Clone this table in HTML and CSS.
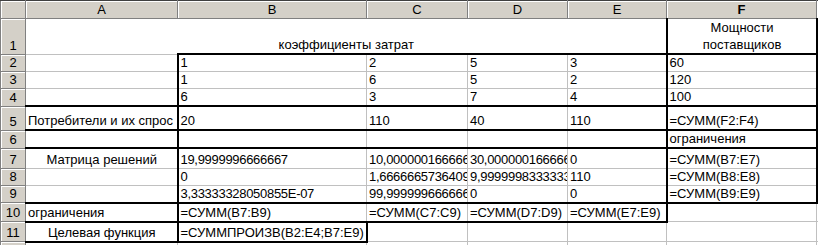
FILE: index.html
```html
<!DOCTYPE html>
<html lang="ru">
<head>
    <meta charset="UTF-8">
    <title>Транспортная задача</title>
    <link rel="stylesheet" href="styles.css">
</head>
<body>
    <table class="sheet">
        <colgroup>
            <col class="col-hdr">
            <col class="col-a">
            <col class="col-b">
            <col class="col-c">
            <col class="col-d">
            <col class="col-e">
            <col class="col-f">
            <col class="col-g">
        </colgroup>
        <tr class="row-head">
            <th class="corner"></th>
            <th>A</th>
            <th>B</th>
            <th>C</th>
            <th>D</th>
            <th>E</th>
            <th class="active">F</th>
            <th></th>
        </tr>
        <tr class="row-1">
            <th>1</th>
            <td colspan="5" class="center">коэффициенты затрат</td>
            <td class="center wrap tl tr tb">Мощности поставщиков</td>
            <td></td>
        </tr>
        <tr class="row-n">
            <th>2</th>
            <td></td>
            <td class="tt tl">1</td>
            <td class="tt">2</td>
            <td class="tt">5</td>
            <td class="tt tr">3</td>
            <td class="tt tl tr">60</td>
            <td></td>
        </tr>
        <tr class="row-n">
            <th>3</th>
            <td></td>
            <td class="tl">1</td>
            <td>6</td>
            <td>5</td>
            <td class="tr">2</td>
            <td class="tl tr">120</td>
            <td></td>
        </tr>
        <tr class="row-n">
            <th>4</th>
            <td></td>
            <td class="tl tb">6</td>
            <td class="tb">3</td>
            <td class="tb">7</td>
            <td class="tb tr">4</td>
            <td class="tl tr tb">100</td>
            <td></td>
        </tr>
        <tr class="row-5">
            <th>5</th>
            <td class="tt tb">Потребители и их спрос</td>
            <td class="tl tb">20</td>
            <td class="tb">110</td>
            <td class="tb">40</td>
            <td class="tb tr">110</td>
            <td class="tr tb">=СУММ(F2:F4)</td>
            <td></td>
        </tr>
        <tr class="row-6">
            <th>6</th>
            <td class="tb"></td>
            <td class="tl tb"></td>
            <td class="tb"></td>
            <td class="tb"></td>
            <td class="tb"></td>
            <td class="tl tr tb">ограничения</td>
            <td></td>
        </tr>
        <tr class="row-7">
            <th>7</th>
            <td class="center">Матрица решений</td>
            <td class="tl num">19,9999996666667</td>
            <td class="num">10,0000001666667</td>
            <td class="num">30,0000001666667</td>
            <td class="tr">0</td>
            <td class="tl tr">=СУММ(B7:E7)</td>
            <td></td>
        </tr>
        <tr class="row-n">
            <th>8</th>
            <td></td>
            <td class="tl">0</td>
            <td class="num">1,66666657364097</td>
            <td class="num">9,99999983333333</td>
            <td class="tr">110</td>
            <td class="tl tr">=СУММ(B8:E8)</td>
            <td></td>
        </tr>
        <tr class="row-n">
            <th>9</th>
            <td class="tb"></td>
            <td class="tl tb num">3,33333328050855E-07</td>
            <td class="tb num">99,9999996666667</td>
            <td class="tb">0</td>
            <td class="tb tr">0</td>
            <td class="tl tr tb">=СУММ(B9:E9)</td>
            <td></td>
        </tr>
        <tr class="row-10">
            <th>10</th>
            <td class="tb">ограничения</td>
            <td class="tl tb">=СУММ(B7:B9)</td>
            <td class="tb">=СУММ(C7:C9)</td>
            <td class="tb">=СУММ(D7:D9)</td>
            <td class="tb tr">=СУММ(E7:E9)</td>
            <td></td>
            <td></td>
        </tr>
        <tr class="row-11">
            <th>11</th>
            <td class="center tb">Целевая функция</td>
            <td class="tl tr tb">=СУММПРОИЗВ(B2:E4;B7:E9)</td>
            <td></td>
            <td></td>
            <td></td>
            <td></td>
            <td></td>
        </tr>
        <tr class="row-n">
            <th>12</th>
            <td></td>
            <td></td>
            <td></td>
            <td></td>
            <td></td>
            <td></td>
            <td></td>
        </tr>
    </table>
</body>
</html>
```

FILE: styles.css
```css
body {
    margin: 0;
    background-color: #fff;
    overflow: hidden;
    font-family: "Liberation Sans", Arial, sans-serif;
    font-size: 13px;
    color: #000;
}
.sheet {
    border-collapse: collapse;
    table-layout: fixed;
    width: 916px;
}
.col-hdr { width: 25px; }
.col-a { width: 152px; }
.col-b { width: 189px; }
.col-c { width: 101px; }
.col-d { width: 100px; }
.col-e { width: 99px; }
.col-f { width: 150px; }
.col-g { width: 100px; }

.sheet td, .sheet th {
    border: 1px solid #c0c0c0;
    padding: 0 1px 1px 2px;
    vertical-align: bottom;
    text-align: left;
    white-space: nowrap;
    overflow: hidden;
    font-weight: normal;
    line-height: 15px;
}
/* row and column headers */
.sheet th {
    background-color: #d4d0c8;
    border-color: #808080;
    text-align: center;
    padding: 0 0 1px 0;
    box-shadow: inset 1px 1px 0 #fff;
}
.row-head th {
    border-top-color: #404040;
    vertical-align: middle;
}
.sheet th.active {
    font-weight: bold;
}

.row-head { height: 18px; }
.row-1 { height: 35px; }
.row-n { height: 17px; }
.row-5 { height: 24px; }
.row-6 { height: 18px; }
.row-7 { height: 20px; }
.row-10 { height: 19px; }
.row-11 { height: 20px; }

.sheet td.center { text-align: center; }
.sheet td.wrap {
    white-space: normal;
    line-height: 17px;
    padding-bottom: 0;
}
/* long solver results, digits sit a little tighter */
.sheet td.num {
    letter-spacing: -0.3px;
}

/* medium borders */
.sheet td.tt { border-top: 2px solid #000; }
.sheet td.tb { border-bottom: 2px solid #000; }
.sheet td.tl { border-left: 2px solid #000; }
.sheet td.tr { border-right: 2px solid #000; }
```
